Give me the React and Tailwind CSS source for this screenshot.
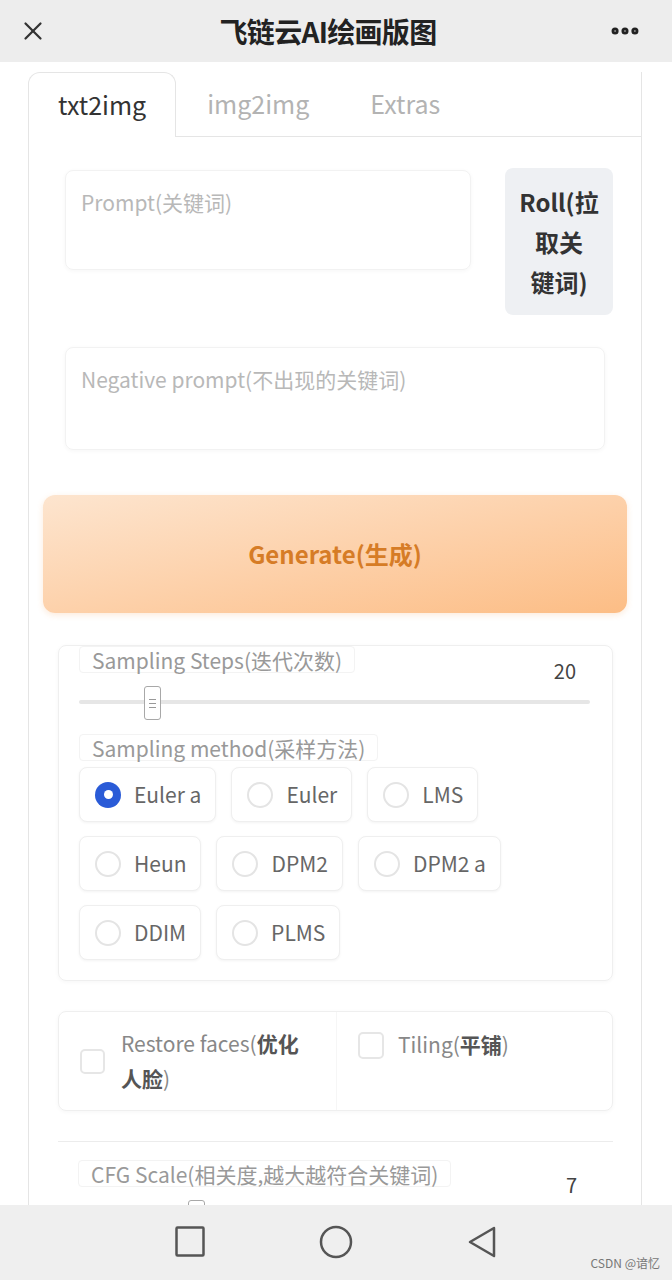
import { X, MoreHorizontal } from 'lucide-react'

const methods = [
  ['Euler a', 'Euler', 'LMS'],
  ['Heun', 'DPM2', 'DPM2 a'],
  ['DDIM', 'PLMS'],
]

function Radio({ label, checked }) {
  return (
    <div className="flex items-center gap-[13px] h-[55px] pl-[15px] pr-[14px] rounded-lg border border-[#efefef] bg-white shadow-[0_1px_3px_rgba(0,0,0,0.05)]">
      {checked ? (
        <span className="w-[26px] h-[26px] rounded-full bg-[#2a5bd7] flex items-center justify-center">
          <span className="w-[9px] h-[9px] rounded-full bg-white" />
        </span>
      ) : (
        <span className="w-[26px] h-[26px] rounded-full border-2 border-[#e4e4e4] bg-white" />
      )}
      <span className="text-[21px] text-[#666]">{label}</span>
    </div>
  )
}

function Slider({ label, value, thumbLeft }) {
  return (
    <div>
      <div className="flex justify-between items-start">
        <span className="h-[27px] px-3 leading-[27px] text-[21px] text-[#999] border border-[#f3f3f3] rounded-sm">
          {label}
        </span>
        <span className="mt-[12px] mr-[16px] text-[20px] leading-[26px] text-[#444]">{value}</span>
      </div>
      <div className="relative h-[36px]">
        <div className="absolute left-0 right-[2px] top-[16px] h-[4px] rounded-full bg-[#e6e6e6]" />
        <div
          className="absolute top-[2px] w-[17px] h-[34px] rounded-[3px] border border-[#a8a8a8] bg-white flex flex-col items-center justify-center gap-[3px]"
          style={{ left: thumbLeft }}
        >
          <span className="w-[7px] h-px bg-[#999]" />
          <span className="w-[7px] h-px bg-[#999]" />
          <span className="w-[7px] h-px bg-[#999]" />
        </div>
      </div>
    </div>
  )
}

export default function App() {
  return (
    <div className="h-[1280px] w-[672px] flex flex-col bg-white font-['Noto_Sans_CJK_SC','Noto_Sans',sans-serif] relative overflow-hidden">
      {/* top bar */}
      <div className="h-[62px] shrink-0 bg-[#ededed] flex items-center justify-between px-[18px]">
        <X size={30} strokeWidth={1.8} className="text-[#333]" />
        <h1 className="text-[28px] font-bold text-[#222] tracking-tight">飞链云AI绘画版图</h1>
        <MoreHorizontal size={34} strokeWidth={3} className="text-[#222] mr-[12px]" />
      </div>

      <div className="flex-1 overflow-hidden pt-[10px]">
        {/* tabs */}
        <div className="ml-[28px] w-[614px] flex h-[65px]">
          <div className="px-[29px] flex items-center border border-b-0 border-[#e5e5e5] rounded-t-xl text-[25px] text-[#333]">
            txt2img
          </div>
          <div className="px-[31px] flex items-center border-b border-[#e5e5e5] text-[25px] text-[#b3b3b3]">
            img2img
          </div>
          <div className="px-[30px] flex items-center border-b border-[#e5e5e5] text-[25px] text-[#b3b3b3]">
            Extras
          </div>
          <div className="flex-1 border-b border-r border-[#e5e5e5]" />
        </div>

        <div className="ml-[28px] w-[614px] h-[1100px] border-x border-[#e5e5e5] px-[14px] pt-[31px]">
          {/* prompt row */}
          <div className="flex items-start ml-[22px] mr-[14px] h-[147px] gap-[34px]">
            <div className="mt-[2px] flex-1 h-[100px] rounded-lg border border-[#f2f2f2] shadow-[0_1px_4px_rgba(0,0,0,0.04)] px-[15px] pt-[17px] text-[21px] leading-[28px] text-[#b8b8b8]">
              Prompt(关键词)
            </div>
            <div className="w-[108px] h-[147px] rounded-lg bg-[#eef0f3] flex items-center justify-center text-center text-[24px] leading-[40px] font-bold text-[#333]">
              <span>
                Roll(拉<br />取关<br />键词)
              </span>
            </div>
          </div>

          {/* negative prompt */}
          <div className="mt-[32px] ml-[22px] mr-[22px] h-[103px] rounded-lg border border-[#f2f2f2] shadow-[0_1px_4px_rgba(0,0,0,0.04)] px-[15px] pt-[17px] text-[21px] leading-[28px] text-[#b8b8b8]">
            Negative prompt(不出现的关键词)
          </div>

          {/* generate */}
          <div className="mt-[45px] h-[118px] rounded-xl bg-linear-to-br from-[#fde5cf] to-[#fcbd85] shadow-[0_2px_6px_rgba(240,150,70,0.2)] flex items-center justify-center text-[24px] font-bold text-[#d67c26]">
            Generate(生成)
          </div>

          {/* sampling */}
          <div className="mt-[32px] ml-[15px] mr-[14px] rounded-lg border border-[#efefef] shadow-[0_1px_4px_rgba(0,0,0,0.04)] px-[20px] pt-0 pb-[20px]">
            <Slider label="Sampling Steps(迭代次数)" value="20" thumbLeft={65} />
            <div className="mt-[14px]">
              <span className="inline-block h-[27px] px-3 leading-[27px] text-[21px] text-[#999] border border-[#f3f3f3] rounded-sm">
                Sampling method(采样方法)
              </span>
            </div>
            <div className="mt-[5px] flex flex-col gap-[14px]">
              {methods.map((row, i) => (
                <div key={i} className="flex gap-[15px]">
                  {row.map(m => (
                    <Radio key={m} label={m} checked={m === 'Euler a'} />
                  ))}
                </div>
              ))}
            </div>
          </div>

          {/* checkboxes */}
          <div className="mt-[30px] ml-[15px] mr-[14px] h-[100px] rounded-lg border border-[#efefef] shadow-[0_1px_4px_rgba(0,0,0,0.04)] flex">
            <div className="w-[278px] flex items-center pl-[21px] gap-[16px] border-r border-[#f6f6f6]">
              <span className="w-[25px] h-[25px] rounded-[5px] border-2 border-[#e6e6e6] shrink-0" />
              <div className="text-[21px] leading-[35px] text-[#888]">
                <div>
                  Restore faces(<span className="font-bold text-[#555]">优化</span>
                </div>
                <div>
                  <span className="font-bold text-[#555]">人脸</span>)
                </div>
              </div>
            </div>
            <div className="flex-1 flex items-start pl-[21px] pt-[15px] gap-[14px]">
              <span className="mt-[5px] w-[26px] h-[27px] rounded-[5px] border-2 border-[#e6e6e6] shrink-0" />
              <span className="text-[21px] leading-[35px] text-[#888]">
                Tiling(<span className="font-bold text-[#555]">平铺</span>)
              </span>
            </div>
          </div>

          {/* cfg */}
          <div className="mt-[30px] ml-[15px] mr-[14px] border-t border-[#ececec] px-[20px] pt-[18px]">
            <Slider label="CFG Scale(相关度,越大越符合关键词)" value="7" thumbLeft={110} />
          </div>
        </div>
      </div>

      {/* android nav */}
      <div className="h-[75px] shrink-0 bg-[#efefef] flex items-center justify-center gap-[114px] pb-[2px]">
        <svg width="30" height="31" viewBox="0 0 30 31">
          <rect x="1.5" y="1.5" width="27" height="28" rx="1" fill="none" stroke="#555" strokeWidth="2.5" />
        </svg>
        <svg width="34" height="34" viewBox="0 0 34 34">
          <circle cx="17" cy="17" r="15" fill="none" stroke="#555" strokeWidth="2.5" />
        </svg>
        <svg width="30" height="32" viewBox="0 0 30 32">
          <path d="M27 2 L3 16 L27 30 Z" fill="none" stroke="#555" strokeWidth="2.5" strokeLinejoin="round" />
        </svg>
      </div>
      <span className="absolute right-[12px] bottom-[8px] text-[12px] text-[#777]">CSDN @谙忆</span>
    </div>
  )
}
